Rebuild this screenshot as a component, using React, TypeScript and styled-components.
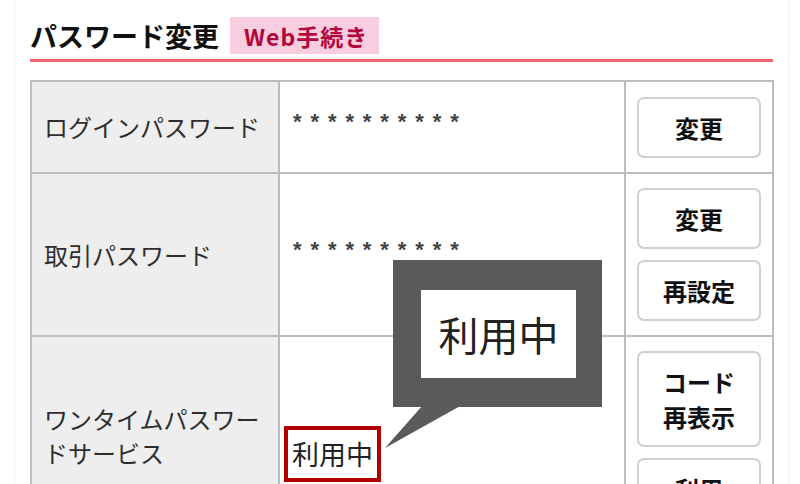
import React from "react";
import styled, { createGlobalStyle } from "styled-components";

const Global = createGlobalStyle`
  html, body { margin: 0; padding: 0; background: #fff; }
  body { font-family: "Noto Sans CJK JP", "Noto Sans", sans-serif; }
`;

const JP = `"Noto Sans CJK JP", "Noto Sans", sans-serif`;

const Screen = styled.div`
  position: relative;
  width: 800px;
  height: 484px;
  overflow: hidden;
`;

const Frame = styled.div`
  margin: 0 11px 0 14px;
  min-height: 484px;
  border-left: 1px solid #f1f1f1;
  border-right: 1px solid #f1f1f1;
  padding: 17px 15px 0 15px;
  box-sizing: border-box;
`;

const Header = styled.div`
  display: flex;
  align-items: center;
  gap: 11px;
  padding-bottom: 5px;
  border-bottom: 3px solid #ec6670;
`;

const Title = styled.h2`
  margin: 0;
  font-family: ${JP};
  font-size: 27px;
  font-weight: 700;
  color: #111;
  line-height: 37px;
`;

const Badge = styled.span`
  display: inline-flex;
  align-items: center;
  height: 37px;
  padding: 0 11px 0 14px;
  background: #f8cde0;
  color: #b0073c;
  font-family: ${JP};
  font-size: 23px;
  font-weight: 700;
  letter-spacing: 1px;
`;

const Table = styled.table`
  margin-top: 18px;
  width: 742px;
  border-collapse: collapse;
  table-layout: fixed;
`;

const LabelCell = styled.th<{ $shift?: number }>`
  width: 248px;
  background: #eeeeee;
  border: 2px solid #bcbcbc;
  padding: 0 12px ${(p) => p.$shift ?? 0}px 12px;
  text-align: left;
  vertical-align: middle;
  font-family: ${JP};
  font-size: 24px;
  font-weight: 400;
  line-height: 34px;
  color: #2e2e2e;
  box-sizing: border-box;
`;

const ValueCell = styled.td`
  width: 346px;
  border: 2px solid #bcbcbc;
  padding: 0 14px;
  vertical-align: middle;
  box-sizing: border-box;
`;

const ActionCell = styled.td`
  width: 148px;
  border: 2px solid #bcbcbc;
  padding: 14px 11px 14px 11px;
  vertical-align: middle;
  box-sizing: border-box;
`;

const Row = styled.tr<{ $h: number }>`
  height: ${(p) => p.$h}px;
`;

const Masked = styled.span`
  font-family: "Liberation Sans", Arial, sans-serif;
  font-size: 22px;
  font-weight: 700;
  letter-spacing: 8.9px;
  color: #444;
  position: relative;
  top: -5px;
  left: -1px;
`;

const Status = styled.span`
  display: inline-block;
  margin-left: -10px;
  margin-top: 2px;
  padding: 4px 4px 4px 4px;
  border: 4px solid #b20000;
  font-family: ${JP};
  font-size: 27px;
  line-height: 40px;
  color: #222;
`;

const Buttons = styled.div`
  display: flex;
  flex-direction: column;
  gap: 11px;
`;

const Button = styled.button`
  width: 124px;
  box-sizing: border-box;
  padding: 11px 0;
  background: #fff;
  border: 2px solid #d0d0d0;
  border-radius: 7px;
  font-family: ${JP};
  font-size: 24px;
  font-weight: 700;
  line-height: 35px;
  color: #111;
  white-space: pre-line;
  cursor: pointer;
`;

const Callout = styled.div`
  position: absolute;
  left: 393px;
  top: 260px;
  width: 209px;
  height: 147px;
  box-sizing: border-box;
  border-style: solid;
  border-color: #5a5a5a;
  border-width: 30px 26px 29px 28px;
  background: #fff;
  display: flex;
  align-items: center;
  justify-content: center;
  font-family: ${JP};
  font-size: 40px;
  color: #222;
  line-height: 1;
`;

const Tail = styled.svg`
  position: absolute;
  left: 380px;
  top: 405px;
  overflow: visible;
`;

export default function App() {
  return (
    <Screen>
      <Global />
      <Frame>
        <Header>
          <Title>パスワード変更</Title>
          <Badge>Web手続き</Badge>
        </Header>
        <Table>
          <tbody>
            <Row $h={92}>
              <LabelCell>ログインパスワード</LabelCell>
              <ValueCell>
                <Masked>**********</Masked>
              </ValueCell>
              <ActionCell>
                <Buttons>
                  <Button>変更</Button>
                </Buttons>
              </ActionCell>
            </Row>
            <Row $h={163}>
              <LabelCell>取引パスワード</LabelCell>
              <ValueCell>
                <Masked>**********</Masked>
              </ValueCell>
              <ActionCell>
                <Buttons>
                  <Button>変更</Button>
                  <Button>再設定</Button>
                </Buttons>
              </ActionCell>
            </Row>
            <Row $h={233}>
              <LabelCell $shift={34}>ワンタイムパスワードサービス</LabelCell>
              <ValueCell>
                <Status>利用中</Status>
              </ValueCell>
              <ActionCell>
                <Buttons>
                  <Button>{"コード\n再表示"}</Button>
                  <Button>{"利用\n停止"}</Button>
                </Buttons>
              </ActionCell>
            </Row>
          </tbody>
        </Table>
      </Frame>
      <Tail width="90" height="50" viewBox="0 0 90 50">
        <polygon points="43,0 82,0 5,43" fill="#5a5a5a" />
      </Tail>
      <Callout>利用中</Callout>
    </Screen>
  );
}
